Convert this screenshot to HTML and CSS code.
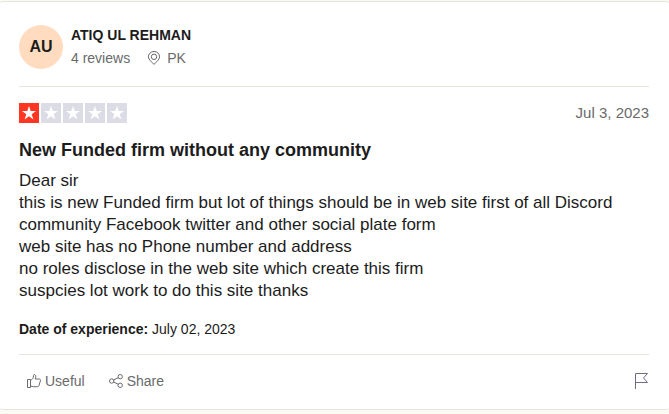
FILE: index.html
```html
<!DOCTYPE html>
<html lang="en">
<head>
    <meta charset="UTF-8">
    <meta name="viewport" content="width=device-width, initial-scale=1.0">
    <title>Review by ATIQ UL REHMAN</title>
    <link rel="stylesheet" href="styles.css">
</head>
<body>
    <article class="review-card">
        <!-- Reviewer -->
        <header class="reviewer">
            <div class="avatar">AU</div>
            <div class="reviewer-info">
                <div class="reviewer-name">ATIQ UL REHMAN</div>
                <div class="reviewer-meta">
                    <span>4 reviews</span>
                    <span class="location">
                        <svg class="pin-icon" viewBox="0 0 14 14" width="14" height="14" aria-hidden="true">
                            <path d="M7 13.400C4.600 10.800 1.400 8.400 1.400 5.800a5.600 5.300 0 0 1 11.200 0C12.600 8.400 9.400 10.800 7 13.400z"/>
                            <circle cx="7" cy="5.800" r="2.700"/>
                        </svg>
                        PK
                    </span>
                </div>
            </div>
        </header>

        <!-- Rating and date -->
        <div class="rating-row">
            <div class="stars" role="img" aria-label="Rated 1 out of 5 stars">
                <span class="star filled"><svg viewBox="0 0 20 20"><path d="M10 3l1.700 5.100H17l-4.300 3.100 1.700 5.200L10 13.200l-4.400 3.200 1.700-5.200L3 8.100h5.300z"/></svg></span>
                <span class="star"><svg viewBox="0 0 20 20"><path d="M10 3l1.700 5.100H17l-4.300 3.100 1.700 5.200L10 13.200l-4.400 3.200 1.700-5.200L3 8.100h5.300z"/></svg></span>
                <span class="star"><svg viewBox="0 0 20 20"><path d="M10 3l1.700 5.100H17l-4.300 3.100 1.700 5.200L10 13.200l-4.400 3.200 1.700-5.200L3 8.100h5.300z"/></svg></span>
                <span class="star"><svg viewBox="0 0 20 20"><path d="M10 3l1.700 5.100H17l-4.300 3.100 1.700 5.200L10 13.200l-4.400 3.200 1.700-5.200L3 8.100h5.300z"/></svg></span>
                <span class="star"><svg viewBox="0 0 20 20"><path d="M10 3l1.700 5.100H17l-4.300 3.100 1.700 5.200L10 13.200l-4.400 3.200 1.700-5.200L3 8.100h5.300z"/></svg></span>
            </div>
            <time class="review-date" datetime="2023-07-03">Jul 3, 2023</time>
        </div>

        <!-- Review text -->
        <h2 class="review-title">New Funded firm without any community</h2>
        <p class="review-text">
            Dear sir<br>
            this is new Funded firm but lot of things should be in web site first of all Discord community Facebook twitter and other social plate form<br>
            web site has no Phone number and address<br>
            no roles disclose in the web site which create this firm<br>
            suspcies lot work to do this site thanks
        </p>
        <p class="experience"><b>Date of experience:</b> July 02, 2023</p>

        <!-- Actions -->
        <footer class="actions">
            <button type="button" class="action-btn">
                <svg viewBox="0 0 14 14" width="14" height="14" aria-hidden="true">
                    <path d="M0.500 5.500h3v8h-3zM3.500 6.500C5.500 5.500 6.500 4 6.500 1.500c0-1.400 2.300-1.200 2.300 0.700 0 1.300-0.300 2.200-0.600 2.800h4.100c1.200 0 1.400 0.900 1.100 1.900l-1.500 4.800c-0.200 0.700-0.600 1-1.300 1H6.500c-1 0-1.800-0.300-3-0.900"/>
                </svg>
                Useful
            </button>
            <button type="button" class="action-btn">
                <svg viewBox="0 0 14 14" width="14" height="14" aria-hidden="true">
                    <circle cx="2.700" cy="7" r="2.200"/>
                    <circle cx="11.200" cy="2.700" r="2.200"/>
                    <circle cx="11.200" cy="11.300" r="2.200"/>
                    <path d="M4.700 6l4.500-2.300M4.700 8l4.500 2.300"/>
                </svg>
                Share
            </button>
            <button type="button" class="flag-btn" aria-label="Flag review">
                <svg viewBox="0 0 14 16" width="14" height="16" aria-hidden="true">
                    <path d="M0.500 16V0.500H12.500L8.500 5l4 4.500H0.500"/>
                </svg>
            </button>
        </footer>
    </article>
</body>
</html>
```

FILE: styles.css
```css
body {
    margin: 0;
    padding: 1px 0;
    font-family: "Liberation Sans", Arial, Helvetica, sans-serif;
    font-size: 14px;
    line-height: 20px;
    color: #1c1c1c;
    background-color: #fcfbf3;
}

.review-card {
    padding: 22px 20px 12px 19px;
    background-color: #fff;
    border-top: 1px solid #e5e5dd;
    border-bottom: 1px solid #e5e5dd;
    border-radius: 3px;
}

/* Reviewer */
.reviewer {
    display: flex;
    align-items: center;
    gap: 8px;
    padding-bottom: 16px;
    border-bottom: 1px solid #e5e5dd;
}
.avatar {
    width: 44px;
    height: 44px;
    border-radius: 50%;
    background-color: #ffdcbf;
    font-size: 16px;
    font-weight: bold;
    line-height: 44px;
    text-align: center;
}
.reviewer-name {
    font-weight: bold;
    line-height: 22px;
}
.reviewer-meta {
    display: flex;
    gap: 17px;
    line-height: 24px;
    color: #696a6a;
}
.location {
    display: flex;
    align-items: center;
    gap: 6px;
}
svg {
    fill: none;
    stroke: #696a6a;
}

/* Rating and date */
.rating-row {
    display: flex;
    justify-content: space-between;
    align-items: center;
    padding: 16px 0;
}
.stars {
    display: flex;
    gap: 2px;
}
.star {
    width: 20px;
    height: 20px;
    background-color: #dcdce6;
}
.star.filled {
    background-color: #ff3722;
}
.star svg {
    display: block;
    fill: #fff;
    stroke: none;
}
.review-date {
    font-size: 15px;
    color: #696a6a;
}

/* Review text */
.review-title {
    margin: 0 0 9px;
    font-size: 18px;
    line-height: 22px;
}
.review-text {
    margin: 0 0 17px;
    font-size: 17px;
    line-height: 22px;
}
.experience {
    margin: 0;
}

/* Actions */
.actions {
    display: flex;
    align-items: center;
    gap: 8px;
    margin-top: 15px;
    padding-top: 10px;
    border-top: 1px solid #e5e5dd;
}
.action-btn,
.flag-btn {
    display: flex;
    align-items: center;
    gap: 4px;
    padding: 6px 8px;
    border: none;
    background: none;
    font: inherit;
    color: #696a6a;
    cursor: pointer;
}
.flag-btn {
    margin-left: auto;
    padding: 6px 0;
}
.flag-btn svg {
    stroke: #6c6c85;
}
```
